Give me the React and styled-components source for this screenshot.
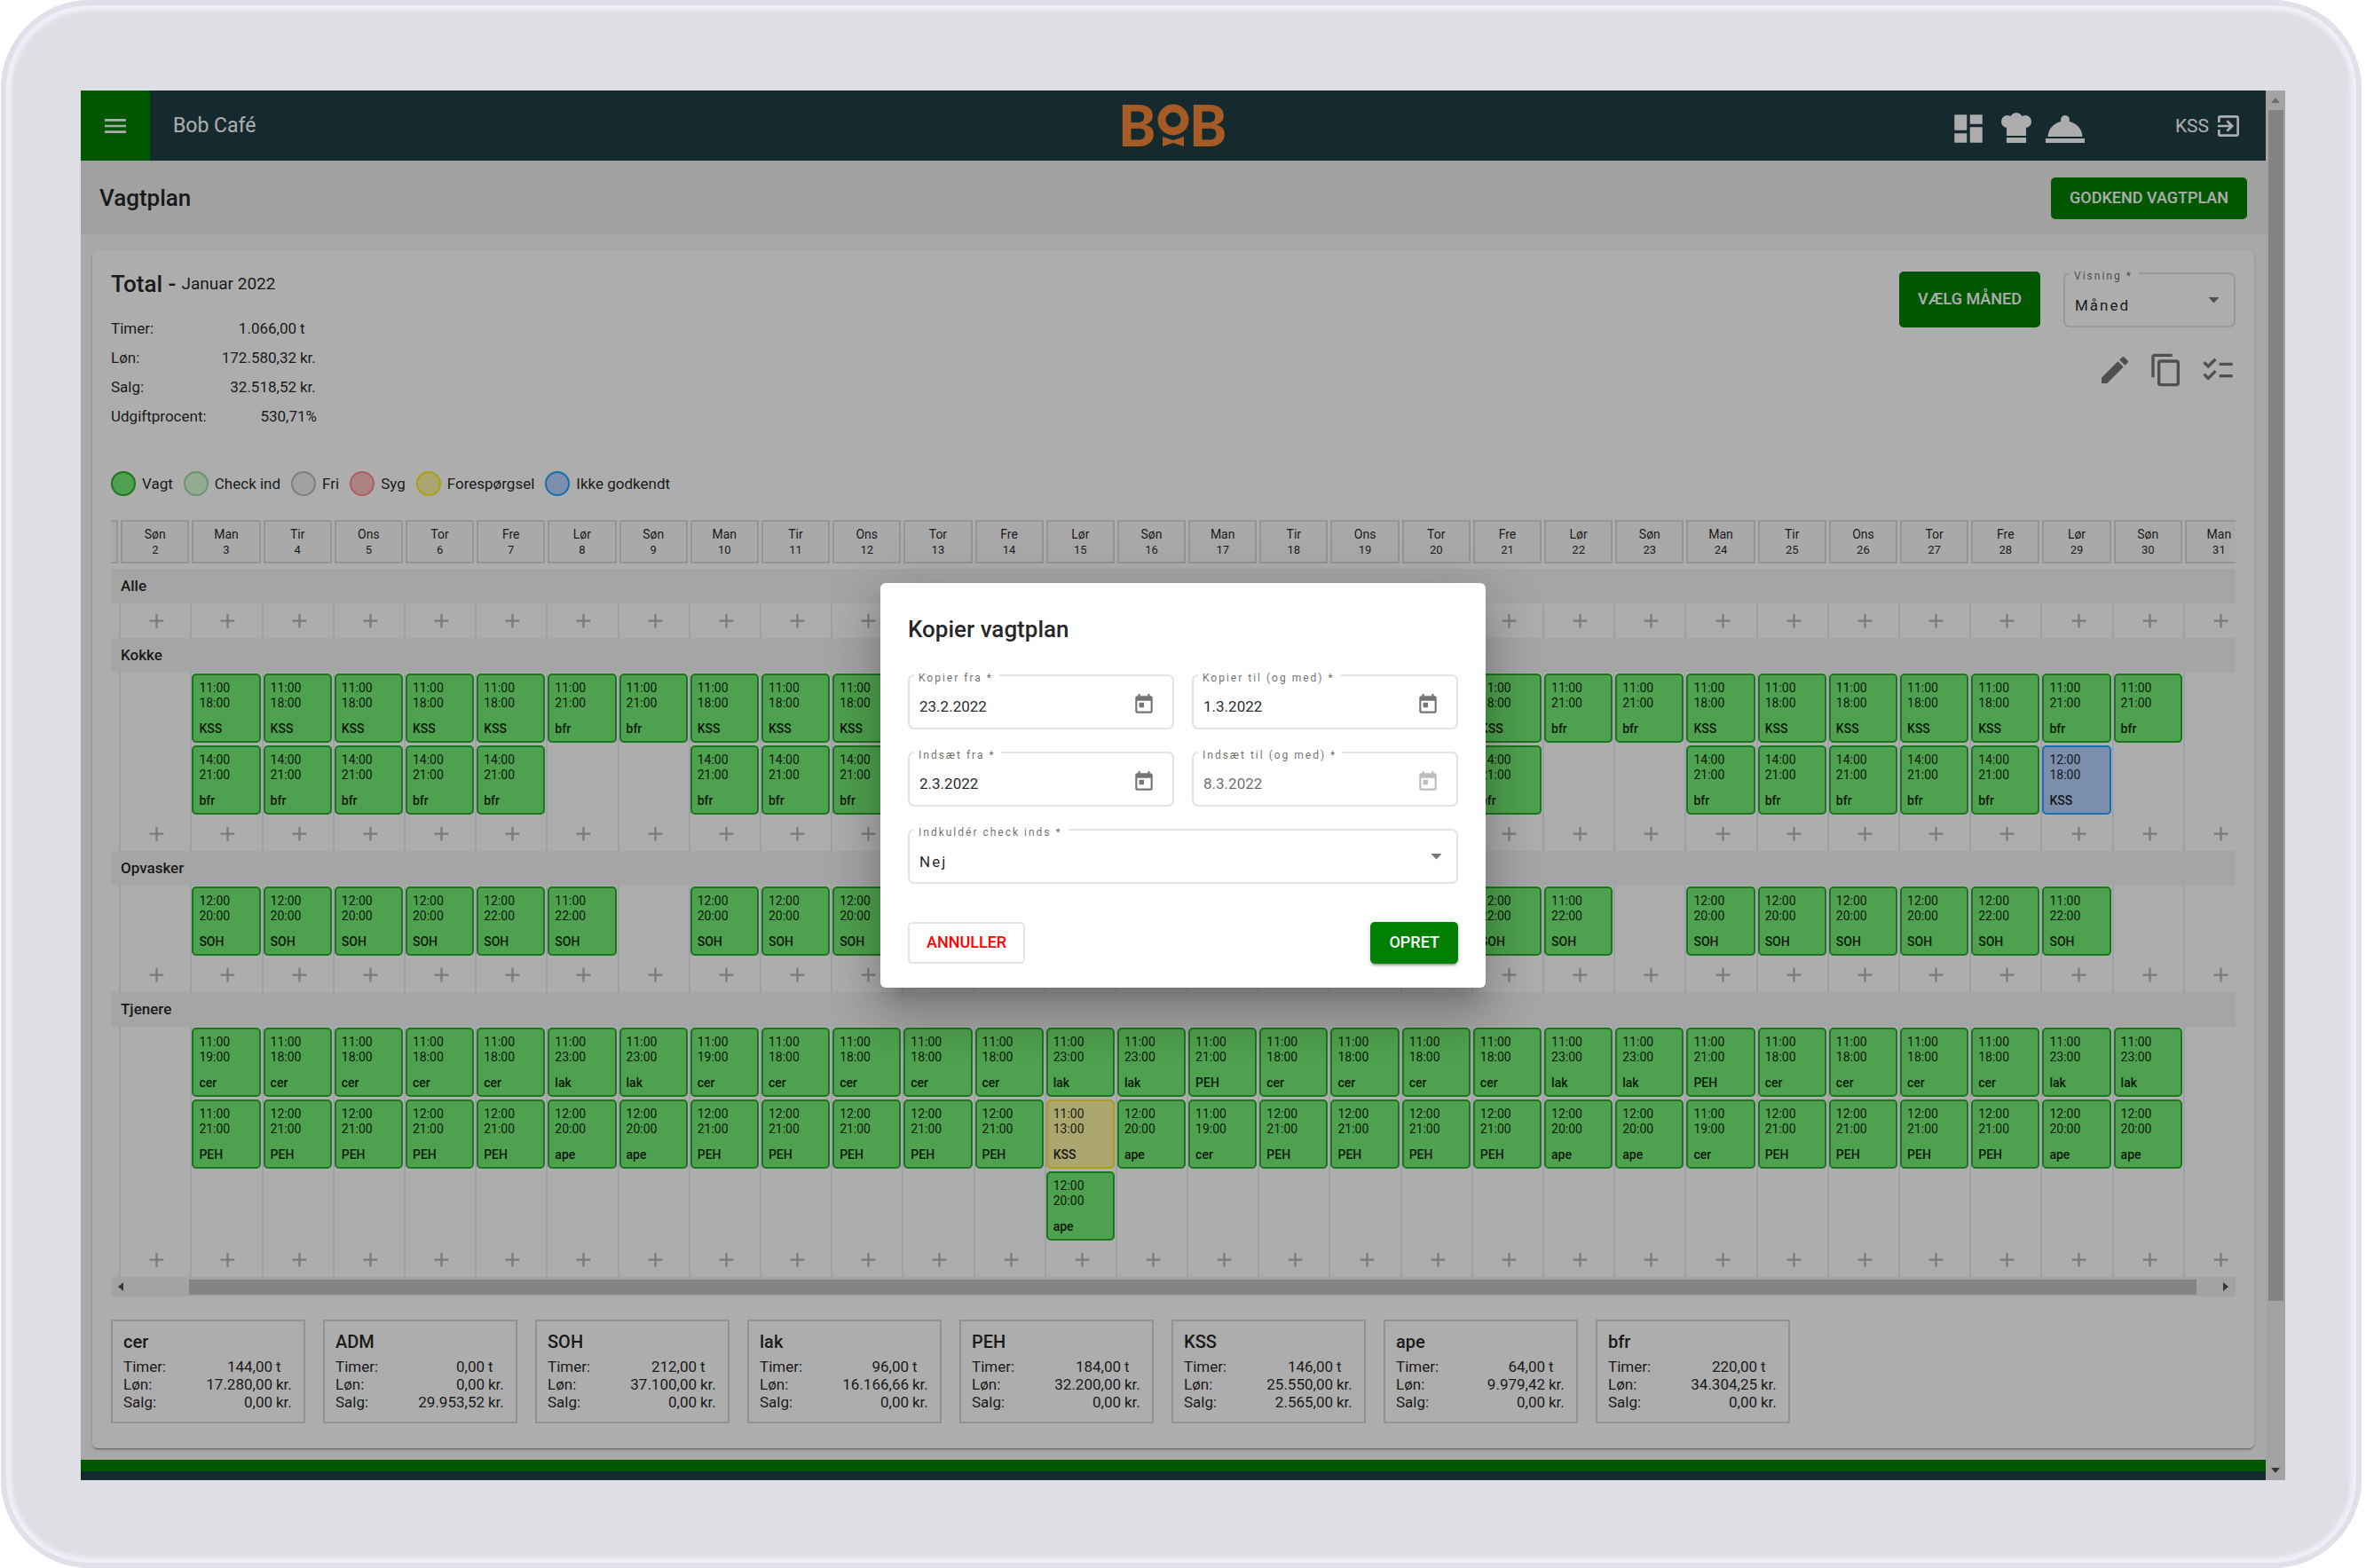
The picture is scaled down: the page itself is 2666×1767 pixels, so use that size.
import React, { useLayoutEffect, useRef } from "react";
import styled, { createGlobalStyle } from "styled-components";
import {
  MdAdd,
  MdChecklist,
  MdContentCopy,
  MdDashboard,
  MdEdit,
  MdExitToApp,
  MdMenu,
  MdToday,
} from "react-icons/md";

const weekdays = ["Lør", "Søn", "Man", "Tir", "Ons", "Tor", "Fre"];
const days = Array.from({ length: 31 }, (_, i) => ({
  date: i + 1,
  name: weekdays[i % 7],
}));

const legend = [
  { kind: "vagt", label: "Vagt" },
  { kind: "checkind", label: "Check ind" },
  { kind: "fri", label: "Fri" },
  { kind: "syg", label: "Syg" },
  { kind: "request", label: "Forespørgsel" },
  { kind: "pending", label: "Ikke godkendt" },
];

const kinds = {
  vagt: { fill: "#73ee73", line: "#2bad2b" },
  checkind: { fill: "#d8fdd8", line: "#9adba4" },
  fri: { fill: "#ededed", line: "#bbbbbb" },
  syg: { fill: "#fec2c2", line: "#ff8d8d" },
  request: { fill: "#fdf5a6", line: "#fbea1c" },
  pending: { fill: "#b5d3ff", line: "#1fa5ff" },
};

const totals = [
  ["Timer:", "1.066,00", "t"],
  ["Løn:", "172.580,32", "kr."],
  ["Salg:", "32.518,52", "kr."],
  ["Udgiftprocent:", "530,71%", null],
];

const employees = [
  { name: "cer", timer: "144,00", lon: "17.280,00", salg: "0,00" },
  { name: "ADM", timer: "0,00", lon: "0,00", salg: "29.953,52" },
  { name: "SOH", timer: "212,00", lon: "37.100,00", salg: "0,00" },
  { name: "lak", timer: "96,00", lon: "16.166,66", salg: "0,00" },
  { name: "PEH", timer: "184,00", lon: "32.200,00", salg: "0,00" },
  { name: "KSS", timer: "146,00", lon: "25.550,00", salg: "2.565,00" },
  { name: "ape", timer: "64,00", lon: "9.979,42", salg: "0,00" },
  { name: "bfr", timer: "220,00", lon: "34.304,25", salg: "0,00" },
];

const shift = (from, to, who, kind = "vagt") => ({ from, to, who, kind });
const isWeekend = (date) => ["Lør", "Søn"].includes(days[date - 1].name);

const kokke = (date) => {
  if (date < 3 || date > 30) return [];
  if (date === 29) {
    return [
      shift("11:00", "21:00", "bfr"),
      shift("12:00", "18:00", "KSS", "pending"),
    ];
  }
  if (isWeekend(date)) return [shift("11:00", "21:00", "bfr")];
  return [shift("11:00", "18:00", "KSS"), shift("14:00", "21:00", "bfr")];
};

const opvasker = (date) => {
  const day = days[date - 1].name;
  if (date < 3 || date > 29 || day === "Søn") return [];
  if (day === "Lør") return [shift("11:00", "22:00", "SOH")];
  return [shift("12:00", day === "Fre" ? "22:00" : "20:00", "SOH")];
};

const tjenere = (date) => {
  if (date < 3 || date > 30) return [];
  if (date === 15) {
    return [
      shift("11:00", "23:00", "lak"),
      shift("11:00", "13:00", "KSS", "request"),
      shift("12:00", "20:00", "ape"),
    ];
  }
  if (isWeekend(date)) {
    return [shift("11:00", "23:00", "lak"), shift("12:00", "20:00", "ape")];
  }
  if (date === 17 || date === 24) {
    return [shift("11:00", "21:00", "PEH"), shift("11:00", "19:00", "cer")];
  }
  if (date === 3) {
    return [shift("11:00", "19:00", "cer"), shift("11:00", "21:00", "PEH")];
  }
  if (date === 10) {
    return [shift("11:00", "19:00", "cer"), shift("12:00", "21:00", "PEH")];
  }
  return [shift("11:00", "18:00", "cer"), shift("12:00", "21:00", "PEH")];
};

const groups = [
  { name: "Alle", shifts: () => [] },
  { name: "Kokke", shifts: kokke },
  { name: "Opvasker", shifts: opvasker },
  { name: "Tjenere", shifts: tjenere },
];

const Logo = () => (
  <svg width="134" height="82" viewBox="-9 -16 134 82" role="img" aria-label="BOB">
    <g fill="#f78636" fontFamily="Lato, sans-serif" fontWeight="900" fontSize="64">
      <text x="-4" y="48">B</text>
      <text x="76" y="48">B</text>
    </g>
    <circle cx="58" cy="18" r="13" fill="none" stroke="#f78636" strokeWidth="9" />
    <path d="M46 37l12 4 12-4v11l-12-4-12 4z" fill="#f78636" />
  </svg>
);

const ChefHat = () => (
  <svg width="34" height="42" viewBox="0 0 34 42" fill="currentColor" aria-hidden="true">
    <circle cx="7" cy="13" r="7" />
    <circle cx="17" cy="10" r="7" />
    <circle cx="27" cy="13" r="7" />
    <path d="M6 12h22v17H6zM6 31h22v6H6z" />
  </svg>
);

const Cloche = () => (
  <svg width="44" height="42" viewBox="0 0 44 42" fill="currentColor" aria-hidden="true">
    <circle cx="22" cy="11" r="5" />
    <path d="M2.500 30C3 20 11 12.500 22 12.500S41 20 41.500 30z" />
    <path d="M0 32h44v5H0z" />
  </svg>
);

const Amount = ({ value, unit }) => (
  <Value>
    {value}
    {unit && <Unit>{unit}</Unit>}
  </Value>
);

const DateField = ({ id, label, value, disabled }) => (
  <Field>
    <FieldLabel htmlFor={id}>{label} *</FieldLabel>
    <FieldInput id={id} type="text" defaultValue={value} disabled={disabled} />
    <CalendarButton type="button" aria-label={`Vælg dato: ${label}`} disabled={disabled}>
      <MdToday />
    </CalendarButton>
  </Field>
);

const SelectField = ({ id, label, options }) => (
  <Field>
    <FieldLabel htmlFor={id}>{label} *</FieldLabel>
    <FieldSelect id={id}>
      {options.map((option) => (
        <option key={option}>{option}</option>
      ))}
    </FieldSelect>
    <Caret />
  </Field>
);

const Schedule = () => {
  const viewport = useRef(null);

  useLayoutEffect(() => {
    viewport.current.scrollLeft = 71;
  }, []);

  return (
    <>
      <Viewport ref={viewport}>
        <Strip>
          <Days>
            {days.map((day) => (
              <DayCell key={day.date}>
                <Day>
                  <span>{day.name}</span>
                  <small>{day.date}</small>
                </Day>
              </DayCell>
            ))}
          </Days>
          {groups.map((group) => (
            <section key={group.name}>
              <Band>
                <BandName>{group.name}</BandName>
              </Band>
              <Days>
                {days.map(({ date }) => (
                  <Column key={date}>
                    {group.shifts(date).map((s, i) => (
                      <Shift key={i} $kind={s.kind}>
                        <span>{s.from}</span>
                        <span>{s.to}</span>
                        <strong>{s.who}</strong>
                      </Shift>
                    ))}
                    <AddButton type="button" aria-label={`Tilføj vagt ${date}. januar`}>
                      <MdAdd />
                    </AddButton>
                  </Column>
                ))}
              </Days>
            </section>
          ))}
        </Strip>
      </Viewport>
      <ScrollX>
        <Arrow $dir="left" />
        <ThumbX />
        <Arrow $dir="right" />
      </ScrollX>
    </>
  );
};

const CopyDialog = () => (
  <Backdrop>
    <Dialog role="dialog" aria-modal="true" aria-labelledby="copy-title">
      <DialogTitle id="copy-title">Kopier vagtplan</DialogTitle>
      <Fields>
        <DateField id="copy-from" label="Kopier fra" value="23.2.2022" />
        <DateField id="copy-to" label="Kopier til (og med)" value="1.3.2022" />
        <DateField id="paste-from" label="Indsæt fra" value="2.3.2022" />
        <DateField id="paste-to" label="Indsæt til (og med)" value="8.3.2022" disabled />
        <FullRow>
          <SelectField id="checkins" label="Indkuldér check inds" options={["Nej", "Ja"]} />
        </FullRow>
      </Fields>
      <Actions>
        <OutlineButton type="button">Annuller</OutlineButton>
        <RaisedButton type="button">Opret</RaisedButton>
      </Actions>
    </Dialog>
  </Backdrop>
);

const App = () => (
  <>
    <GlobalStyle />
    <Tablet>
      <Screen>
        <Page>
          <Header>
            <HeaderLeft>
              <MenuButton type="button" aria-label="Menu">
                <MdMenu />
              </MenuButton>
              <Place>Bob Café</Place>
            </HeaderLeft>
            <Logo />
            <HeaderRight>
              <Shortcuts>
                <IconLink href="#dashboard" aria-label="Dashboard">
                  <MdDashboard size={42} />
                </IconLink>
                <IconLink href="#kitchen" aria-label="Køkken">
                  <ChefHat />
                </IconLink>
                <IconLink href="#service" aria-label="Servering">
                  <Cloche />
                </IconLink>
              </Shortcuts>
              <UserLink href="#logout">
                KSS
                <MdExitToApp size={32} />
              </UserLink>
            </HeaderRight>
          </Header>
          <TitleBar>
            <PageTitle>Vagtplan</PageTitle>
            <Button type="button">Godkend vagtplan</Button>
          </TitleBar>
          <Main>
            <Card>
              <CardTop>
                <div>
                  <TotalTitle>
                    Total - <span>Januar 2022</span>
                  </TotalTitle>
                  <Totals>
                    {totals.map(([label, value, unit]) => (
                      <StatRow key={label}>
                        <dt>{label}</dt>
                        <dd>
                          <Amount value={value} unit={unit} />
                        </dd>
                      </StatRow>
                    ))}
                  </Totals>
                </div>
                <Controls>
                  <ControlRow>
                    <TallButton type="button">Vælg måned</TallButton>
                    <SmallSelect>
                      <SelectField id="view" label="Visning" options={["Måned", "Uge"]} />
                    </SmallSelect>
                  </ControlRow>
                  <Tools>
                    <ToolButton type="button" aria-label="Rediger">
                      <MdEdit />
                    </ToolButton>
                    <ToolButton type="button" aria-label="Kopier">
                      <MdContentCopy />
                    </ToolButton>
                    <ToolButton type="button" aria-label="Godkend">
                      <MdChecklist />
                    </ToolButton>
                  </Tools>
                </Controls>
              </CardTop>
              <Legend>
                {legend.map(({ kind, label }) => (
                  <LegendItem key={kind}>
                    <Dot $kind={kind} />
                    {label}
                  </LegendItem>
                ))}
              </Legend>
              <Schedule />
              <Employees>
                {employees.map((e) => (
                  <Employee key={e.name}>
                    <h3>{e.name}</h3>
                    <EmployeeStats>
                      <dt>Timer:</dt>
                      <dd>
                        <Amount value={e.timer} unit="t" />
                      </dd>
                      <dt>Løn:</dt>
                      <dd>
                        <Amount value={e.lon} unit="kr." />
                      </dd>
                      <dt>Salg:</dt>
                      <dd>
                        <Amount value={e.salg} unit="kr." />
                      </dd>
                    </EmployeeStats>
                  </Employee>
                ))}
              </Employees>
            </Card>
          </Main>
          <Footer />
        </Page>
        <ScrollY>
          <Arrow $dir="up" $muted />
          <ThumbY />
          <Arrow $dir="down" />
        </ScrollY>
        <CopyDialog />
      </Screen>
    </Tablet>
  </>
);

const GlobalStyle = createGlobalStyle`
  * {
    box-sizing: border-box;
  }
  body {
    margin: 0;
    background: #fff;
    color: rgba(0, 0, 0, 0.87);
    font-family: Roboto, sans-serif;
    font-size: 17px;
  }
  h1, h2, h3, dl, dd {
    margin: 0;
    font-weight: 500;
  }
  dt, dd {
    font-weight: 400;
  }
  button, input, select {
    font-family: inherit;
  }
  svg {
    display: block;
    flex-shrink: 0;
  }
`;

const Tablet = styled.div`
  min-height: 100vh;
  display: flex;
  margin: 0 5px 0 1px;
  padding: 102px 86px 99px 90px;
  border-radius: 100px;
  background: #dddfe4;
  box-shadow: inset 0 0 0 6px #e0e1e8, inset 0 0 4px 12px #eff0f5;
`;

const Screen = styled.div`
  position: relative;
  flex: 1;
  min-width: 0;
  display: flex;
  background: #fafafa;
`;

const Page = styled.div`
  flex: 1;
  min-width: 0;
  display: flex;
  flex-direction: column;
`;

const Header = styled.header`
  display: grid;
  grid-template-columns: 1fr auto 1fr;
  grid-template-rows: 79px;
  align-items: center;
  background: #1f3f45;
  color: #fff;
`;

const HeaderLeft = styled.div`
  display: flex;
  align-items: center;
  gap: 26px;
  height: 100%;
`;

const MenuButton = styled.button`
  display: grid;
  place-items: center;
  width: 78px;
  height: 100%;
  border: 0;
  background: #008000;
  color: #fff;
  font-size: 32px;
`;

const Place = styled.div`
  font-size: 23px;
`;

const HeaderRight = styled.div`
  display: flex;
  align-items: center;
  justify-content: flex-end;
  gap: 102px;
  padding-right: 26px;
`;

const Shortcuts = styled.nav`
  display: flex;
  align-items: center;
  gap: 16px;
  padding-top: 6px;
`;

const IconLink = styled.a`
  color: #fff;
`;

const UserLink = styled.a`
  display: flex;
  align-items: center;
  gap: 6px;
  color: #fff;
  font-size: 21px;
  text-decoration: none;
`;

const TitleBar = styled.div`
  display: flex;
  align-items: center;
  justify-content: space-between;
  height: 83px;
  padding: 2px 21px 0;
  background: #ededed;
`;

const PageTitle = styled.h1`
  padding-bottom: 2px;
  font-size: 26px;
`;

const Button = styled.button`
  height: 47px;
  padding: 0 21px 2px;
  border: 0;
  border-radius: 5px;
  background: #008000;
  color: #fff;
  font-size: 18px;
  font-weight: 500;
  text-transform: uppercase;
`;

const TallButton = styled(Button)`
  height: 63px;
`;

const RaisedButton = styled(Button)`
  box-shadow: 0 4px 2px -2px rgba(0, 0, 0, 0.2), 0 2px 3px rgba(0, 0, 0, 0.14),
    0 1px 7px rgba(0, 0, 0, 0.12);
`;

const OutlineButton = styled(Button)`
  padding: 0 19px 2px;
  border: 2px solid #e4e4ea;
  background: #fff;
  color: #f00;
`;

const Main = styled.main`
  flex: 1;
  padding: 18px 13px 13px;
`;

const Card = styled.div`
  padding: 24px 21px 28px;
  border-radius: 6px;
  background: #fff;
  box-shadow: 0 3px 1px -2px rgba(0, 0, 0, 0.2), 0 2px 2px rgba(0, 0, 0, 0.14),
    0 1px 5px rgba(0, 0, 0, 0.12);
`;

const CardTop = styled.div`
  display: flex;
  justify-content: space-between;
`;

const TotalTitle = styled.h2`
  display: flex;
  align-items: center;
  gap: 6px;
  font-size: 26px;
  line-height: 28px;
  span {
    font-size: 19px;
    font-weight: 400;
  }
`;

const Totals = styled.dl`
  width: 232px;
  margin-top: 20px;
`;

const StatRow = styled.div`
  display: flex;
  justify-content: space-between;
  line-height: 33px;
`;

const Value = styled.span`
  display: flex;
  justify-content: flex-end;
`;

const Unit = styled.span`
  width: 23px;
  padding-left: 4px;
`;

const Controls = styled.div`
  display: flex;
  flex-direction: column;
  align-items: flex-end;
`;

const ControlRow = styled.div`
  display: flex;
  align-items: flex-end;
  gap: 26px;
`;

const SmallSelect = styled.div`
  width: 194px;
`;

const Tools = styled.div`
  display: flex;
  gap: 18px;
  margin-top: 28px;
`;

const ToolButton = styled.button`
  padding: 0;
  border: 0;
  background: none;
  color: #757575;
  font-size: 40px;
`;

const Legend = styled.div`
  display: flex;
  gap: 12px;
  margin: 45px 0 27px;
`;

const LegendItem = styled.div`
  display: flex;
  align-items: center;
  gap: 7px;
`;

const Dot = styled.span`
  width: 28px;
  height: 28px;
  border: 2px solid ${({ $kind }) => kinds[$kind].line};
  border-radius: 50%;
  background: ${({ $kind }) => kinds[$kind].fill};
`;

const Viewport = styled.div`
  overflow: hidden;
`;

const Strip = styled.div`
  width: 2486px;
`;

const Days = styled.div`
  display: grid;
  grid-template-columns: repeat(31, 1fr);
`;

const DayCell = styled.div`
  padding: 0 1px 6px 2px;
`;

const Day = styled.div`
  display: flex;
  flex-direction: column;
  align-items: center;
  height: 49px;
  padding-top: 6px;
  border: 2px solid #dcdcdc;
  background: #fafafa;
  font-size: 14px;
  line-height: 17px;
  small {
    font-size: 13px;
  }
`;

const Band = styled.div`
  height: 39px;
  padding-left: 82px;
  background: #f3f3f3;
`;

const BandName = styled.h3`
  font-size: 17px;
  line-height: 39px;
`;

const Column = styled.div`
  display: flex;
  flex-direction: column;
  padding: 0 1px 0 0;
  border-left: 2px solid #e6eefa;
`;

const Shift = styled.div`
  display: flex;
  flex-direction: column;
  height: 78px;
  margin: 1px 0 2px;
  padding: 6px;
  border: 2px solid ${({ $kind }) => kinds[$kind].line};
  border-radius: 5px;
  background: ${({ $kind }) => kinds[$kind].fill};
  font-size: 14px;
  line-height: 17px;
  strong {
    margin-top: 12px;
    font-weight: 500;
  }
`;

const AddButton = styled.button`
  display: grid;
  place-items: center;
  height: 39px;
  margin-top: auto;
  padding: 0 0 0 4px;
  border: 0;
  background: none;
  color: #b4b4b4;
  font-size: 27px;
`;

const ScrollX = styled.div`
  display: flex;
  align-items: center;
  justify-content: space-between;
  height: 22px;
  padding: 0 8px;
  background: #f1f1f1;
`;

const ThumbX = styled.div`
  flex: 1;
  height: 17px;
  margin: 0 30px 0 74px;
  background: #c1c1c1;
`;

const ScrollY = styled.div`
  display: flex;
  flex-direction: column;
  align-items: center;
  width: 22px;
  padding: 8px 0;
  background: #f1f1f1;
`;

const ThumbY = styled.div`
  flex: 1;
  width: 17px;
  margin: 8px 0 188px;
  background: #c1c1c1;
`;

const arrows = {
  up: "50% 0, 100% 100%, 0 100%",
  down: "0 0, 100% 0, 50% 100%",
  left: "0 50%, 100% 0, 100% 100%",
  right: "0 0, 100% 50%, 0 100%",
};

const Arrow = styled.span`
  width: ${({ $dir }) => ($dir === "up" || $dir === "down" ? 10 : 6)}px;
  height: ${({ $dir }) => ($dir === "up" || $dir === "down" ? 6 : 10)}px;
  background: ${({ $muted }) => ($muted ? "#a0a0a0" : "#505050")};
  clip-path: polygon(${({ $dir }) => arrows[$dir]});
`;

const Employees = styled.div`
  display: flex;
  flex-wrap: wrap;
  gap: 20px;
  margin-top: 26px;
`;

const Employee = styled.article`
  width: 219px;
  padding: 10px 12px 12px;
  border: 2px solid #d8d8d8;
  h3 {
    font-size: 20px;
    line-height: 26px;
  }
`;

const EmployeeStats = styled.dl`
  display: grid;
  grid-template-columns: auto 1fr;
  margin-top: 5px;
  line-height: 20px;
`;

const Footer = styled.footer`
  height: 23px;
  border-top: 13px solid #008000;
  background: #1f3f45;
`;

const Backdrop = styled.div`
  position: absolute;
  inset: 0;
  display: grid;
  place-items: center;
  background: rgba(0, 0, 0, 0.32);
`;

const Dialog = styled.div`
  width: 682px;
  max-width: 90%;
  padding: 31px 31px 27px;
  border-radius: 6px;
  background: #fff;
  box-shadow: 0 15px 20px -10px rgba(0, 0, 0, 0.2), 0 33px 52px 4px rgba(0, 0, 0, 0.14),
    0 12px 63px 11px rgba(0, 0, 0, 0.12);
`;

const DialogTitle = styled.h2`
  font-size: 26px;
  line-height: 42px;
`;

const Fields = styled.div`
  display: grid;
  grid-template-columns: 1fr 1fr;
  gap: 25px 20px;
  margin-top: 30px;
`;

const FullRow = styled.div`
  grid-column: 1 / -1;
`;

const Actions = styled.div`
  display: flex;
  justify-content: space-between;
  margin-top: 43px;
`;

const Field = styled.div`
  position: relative;
  display: flex;
  align-items: center;
  height: 62px;
  border: 2px solid #e2e2e8;
  border-radius: 7px;
`;

const FieldLabel = styled.label`
  position: absolute;
  top: -6px;
  left: 5px;
  padding: 0 7px 0 5px;
  background: #fff;
  color: rgba(0, 0, 0, 0.6);
  font-size: 12px;
  line-height: 16px;
  letter-spacing: 2px;
`;

const FieldInput = styled.input`
  flex: 1;
  min-width: 0;
  height: 100%;
  padding: 9px 0 0 11px;
  border: 0;
  background: none;
  color: rgba(0, 0, 0, 0.87);
  font-size: 17px;
  outline: none;
  &:disabled {
    color: rgba(0, 0, 0, 0.6);
  }
`;

const CalendarButton = styled.button`
  margin-right: 19px;
  padding: 6px 0 0;
  border: 0;
  background: none;
  color: #757575;
  font-size: 26px;
  &:disabled {
    color: #bdbdbd;
  }
`;

const FieldSelect = styled.select`
  flex: 1;
  height: 100%;
  padding: 11px 0 0 11px;
  border: 0;
  appearance: none;
  background: none;
  color: rgba(0, 0, 0, 0.87);
  font-size: 17px;
  letter-spacing: 2px;
  outline: none;
`;

const Caret = styled.span`
  width: 13px;
  height: 7px;
  margin-right: 16px;
  background: #757575;
  clip-path: polygon(0 0, 100% 0, 50% 100%);
`;

export default App;
